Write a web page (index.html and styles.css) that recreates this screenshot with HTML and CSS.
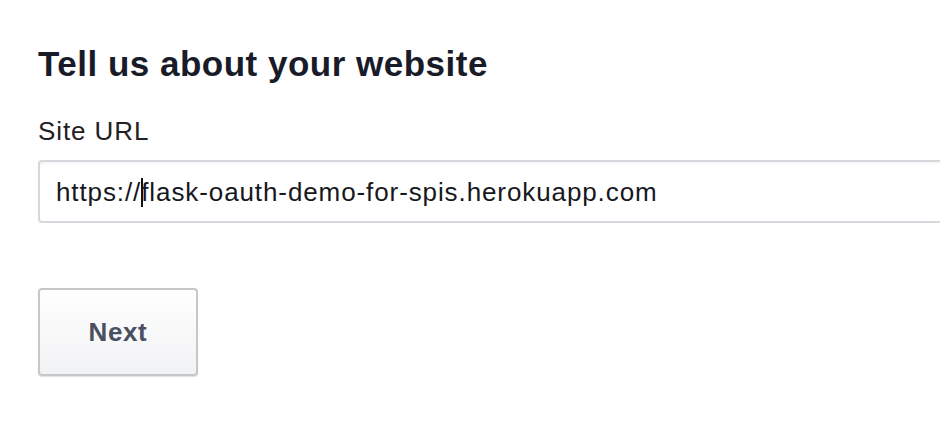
FILE: index.html
```html
<!DOCTYPE html>
<html>
<head>
<meta charset="utf-8">
<link rel="stylesheet" href="styles.css">
</head>
<body>
<main class="page">
  <h1 class="title">Tell us about your website</h1>
  <label class="label">Site URL</label>
  <div class="field"><span class="field-text">https://<span class="caret"></span>flask-oauth-demo-for-spis.herokuapp.com</span></div>
  <button class="btn">Next</button>
</main>
</body>
</html>
```
FILE: styles.css
```css
html, body {
  margin: 0;
  padding: 0;
  background: #ffffff;
  overflow: hidden;
}
.page {
  width: 940px;
  height: 426px;
  box-sizing: border-box;
  padding: 44px 0 0 38px;
  display: flex;
  flex-direction: column;
  align-items: flex-start;
  overflow: hidden;
  font-family: "Liberation Sans", Arial, Helvetica, sans-serif;
}
.title {
  margin: 0;
  font-size: 35px;
  line-height: 40px;
  font-weight: 700;
  letter-spacing: 0.5px;
  color: #191c28;
}
.label {
  margin-top: 31px;
  font-size: 26px;
  line-height: 32px;
  letter-spacing: 0.9px;
  color: #1f2125;
}
.field {
  margin-top: 13px;
  width: 910px;
  flex-shrink: 0;
  height: 63px;
  box-sizing: border-box;
  border: 2px solid #d5d8dc;
  border-radius: 4px;
  box-shadow: inset 0 2px 2px rgba(0, 0, 0, 0.04);
  padding: 0 16px;
  display: flex;
  align-items: center;
}
.field-text {
  font-size: 26px;
  line-height: 32px;
  letter-spacing: 0.9px;
  color: #16181d;
  white-space: nowrap;
}
.caret {
  display: inline-block;
  width: 2px;
  height: 29px;
  background: #111;
  vertical-align: -6px;
  margin-right: -2px;
}
.btn {
  margin-top: 65px;
  width: 160px;
  height: 88px;
  box-sizing: border-box;
  border: 2px solid #c6c7c9;
  border-radius: 4px;
  background: linear-gradient(#ffffff, #f1f2f4);
  box-shadow: 0 1px 1px rgba(0, 0, 0, 0.12);
  font-family: "Liberation Sans", Arial, Helvetica, sans-serif;
  font-size: 26px;
  font-weight: 700;
  letter-spacing: 0.6px;
  color: #4a5061;
  padding: 0;
  cursor: pointer;
}
```
